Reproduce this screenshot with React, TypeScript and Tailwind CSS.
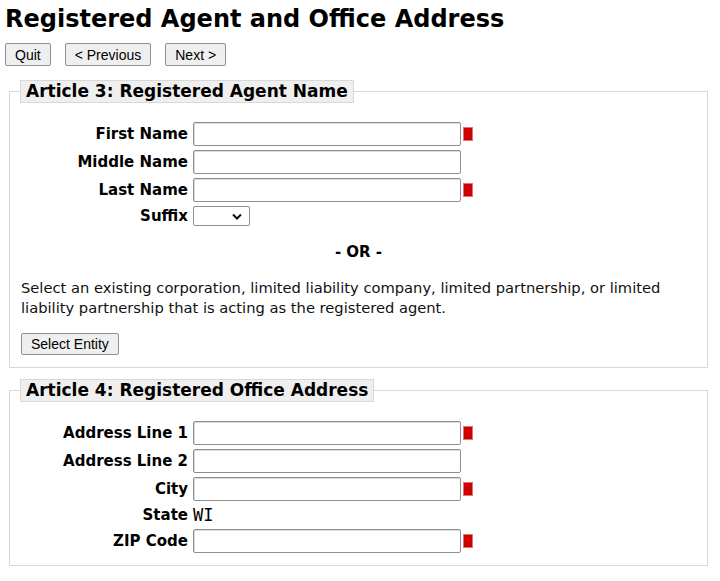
import React from "react";

function Req() {
  return <span className="ml-[2px] inline-block h-[14px] w-[10px] border border-[#e57373] bg-[#cc0000]" />;
}

function Row({ label, req, children }: { label: string; req?: boolean; children?: React.ReactNode }) {
  return (
    <div className="flex items-center">
      <div className="w-[167px] text-right text-[15px] font-bold leading-[20px]">{label}</div>
      <div className="ml-[5px] flex items-center">
        {children ?? (
          <input
            type="text"
            className="h-[24px] w-[268px] rounded-[2px] border border-[#8f8f8f] bg-white px-1 shadow-[inset_1px_1px_0_#dcdcdc]"
          />
        )}
        {req && <Req />}
      </div>
    </div>
  );
}

function Btn({ children }: { children: React.ReactNode }) {
  return (
    <button className="h-[23px] rounded-[2px] border border-[#8f8f8f] bg-[#efefef] px-[9px] font-['Liberation_Sans',Arial,sans-serif] text-[14px] leading-[20px] text-black">
      {children}
    </button>
  );
}

export default function App() {
  return (
    <div className="min-h-[581px] bg-white font-['DejaVu_Sans',Verdana,sans-serif] text-black">
      <h1 className="px-[5px] pt-[5px] text-[24px] font-bold leading-[28px]">Registered Agent and Office Address</h1>
      <div className="mt-[10px] flex gap-[14px] px-[5px]">
        <Btn>Quit</Btn>
        <Btn>&lt; Previous</Btn>
        <Btn>Next &gt;</Btn>
      </div>

      <fieldset className="ml-[9px] mr-[12px] mt-[14px] border border-[#d8d8d8] px-[11px] pb-[11px]">
        <legend className="ml-[-1px] h-[23px] border border-[#d8d8d8] bg-[#efefef] px-[5px] text-[17px] font-bold leading-[21px]">
          Article 3: Registered Agent Name
        </legend>
        <div className="flex flex-col gap-[4px] pt-[19px]">
          <Row label="First Name" req />
          <Row label="Middle Name" />
          <Row label="Last Name" req />
          <Row label="Suffix">
            <div className="relative h-[20px] w-[57px]">
              <select className="h-[20px] w-[57px] appearance-none rounded-[2px] border border-[#8f8f8f] bg-white" />
              <svg className="pointer-events-none absolute right-[8px] top-[7px]" width="10" height="7" viewBox="0 0 10 7">
                <polyline points="1,1.5 5,5.5 9,1.5" fill="none" stroke="#111" strokeWidth="2" />
              </svg>
            </div>
          </Row>
        </div>
        <div className="mt-[17px] text-center text-[15px] font-bold leading-[18px]">- OR -</div>
        <p className="mt-[17px] text-[14.7px] leading-[20px] text-[#111]">
          Select an existing corporation, limited liability company, limited partnership, or limited liability partnership that is acting as the registered agent.
        </p>
        <div className="mt-[14px]">
          <button className="h-[22px] rounded-[2px] border border-[#8f8f8f] bg-[#efefef] px-[9px] font-['Liberation_Sans',Arial,sans-serif] text-[14px] leading-[20px]">
            Select Entity
          </button>
        </div>
      </fieldset>

      <fieldset className="ml-[9px] mr-[12px] mt-[11px] border border-[#d8d8d8] px-[11px] pb-[12px]">
        <legend className="ml-[-1px] h-[23px] border border-[#d8d8d8] bg-[#efefef] px-[5px] text-[17px] font-bold leading-[21px]">
          Article 4: Registered Office Address
        </legend>
        <div className="flex flex-col gap-[4px] pt-[19px]">
          <Row label="Address Line 1" req />
          <Row label="Address Line 2" />
          <Row label="City" req />
          <Row label="State">
            <span className="font-['DejaVu_Sans_Mono',monospace] text-[17px] leading-[20px]">WI</span>
          </Row>
          <Row label="ZIP Code" req />
        </div>
      </fieldset>
    </div>
  );
}
